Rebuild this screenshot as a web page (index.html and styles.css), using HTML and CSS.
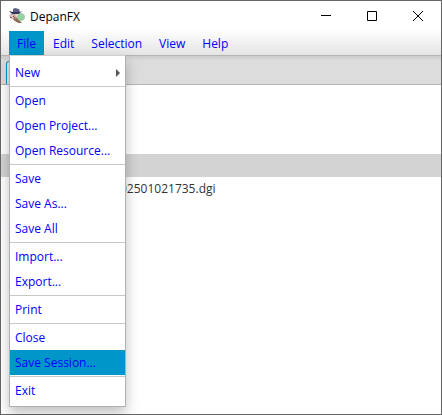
FILE: index.html
```html
<!DOCTYPE html>
<html lang="en">
<head>
    <meta charset="UTF-8">
    <meta name="viewport" content="width=device-width, initial-scale=1.0">
    <title>DepanFX</title>
    <link rel="stylesheet" href="styles.css">
</head>
<body>
    <div class="window">
        <header class="title-bar">
            <svg class="app-icon" width="16" height="16" viewBox="0 0 16 16" aria-hidden="true">
                <path d="M1 7 L4 5 L12 5 L13 10 L10 14 L5 12 L1 9 Z" fill="#c9a491"/>
                <path d="M0 7 L3 6 L5 8 L4 11 L1 10 Z" fill="#d9bfc4"/>
                <path d="M4 11 L8 10 L11 13 L13 15 L9 15 L6 13 Z" fill="#8d6a55"/>
                <path d="M6 6 L10 6 L9 8 L7 9 Z" fill="#ecdcd0"/>
                <path d="M4 1 L6 0 L10 1 L11 4 L4 4 Z" fill="#5a5f83"/>
                <path d="M0 3 L4 4 L11 4 L13 3 L10 6 L3 6 Z" fill="#34375c"/>
                <path d="M1 9 L3 10 M4 8 L6 10 M8 11 L9 12" stroke="#7a564c"/>
                <circle cx="12" cy="9" r="3.5" fill="#8fd49b" stroke="#a9cbb0"/>
            </svg>
            <h1 class="title">DepanFX</h1>
            <div class="window-buttons">
                <button class="window-button" type="button" aria-label="Minimize">
                    <svg width="10" height="10" viewBox="0 0 10 10"><path d="M0 4.5H10"/></svg>
                </button>
                <button class="window-button" type="button" aria-label="Maximize">
                    <svg width="10" height="10" viewBox="0 0 10 10"><path d="M.5 .5H9.5V9.5H.5Z"/></svg>
                </button>
                <button class="window-button" type="button" aria-label="Close">
                    <svg width="10" height="10" viewBox="0 0 10 10"><path d="M0 0L10 10M10 0L0 10"/></svg>
                </button>
            </div>
        </header>

        <nav class="menu-bar">
            <div class="menu">
                <button class="menu-button active" type="button">File</button>
                <div class="dropdown">
                    <button class="menu-item" type="button">New
                        <svg class="arrow" width="4" height="8" viewBox="0 0 4 8"><path d="M0 0L4 4L0 8Z"/></svg>
                    </button>
                    <hr>
                    <button class="menu-item" type="button">Open</button>
                    <button class="menu-item" type="button">Open Project...</button>
                    <button class="menu-item" type="button">Open Resource...</button>
                    <hr>
                    <button class="menu-item" type="button">Save</button>
                    <button class="menu-item" type="button">Save As...</button>
                    <button class="menu-item" type="button">Save All</button>
                    <hr>
                    <button class="menu-item" type="button">Import...</button>
                    <button class="menu-item" type="button">Export...</button>
                    <hr>
                    <button class="menu-item" type="button">Print</button>
                    <hr>
                    <button class="menu-item" type="button">Close</button>
                    <button class="menu-item active" type="button">Save Session...</button>
                    <hr>
                    <button class="menu-item" type="button">Exit</button>
                </div>
            </div>
            <button class="menu-button" type="button">Edit</button>
            <button class="menu-button" type="button">Selection</button>
            <button class="menu-button" type="button">View</button>
            <button class="menu-button" type="button">Help</button>
        </nav>

        <div class="tab-strip">
            <div class="tab"></div>
        </div>

        <main class="tree">
            <div class="row selected"></div>
            <div class="row">02501021735.dgi</div>
        </main>
    </div>
</body>
</html>
```
FILE: styles.css
```css
* {
    box-sizing: border-box;
}
body {
    margin: 0;
    font-family: "Open Sans", "Noto Sans", sans-serif;
    font-size: 12px;
    color: #333;
}
button {
    font: inherit;
    border: none;
    background: none;
    padding: 0;
}
.window {
    display: flex;
    flex-direction: column;
    min-height: 100vh;
    background-color: white;
    border: 1px solid #666;
}
.title-bar {
    display: flex;
    align-items: center;
    height: 30px;
    padding-left: 8px;
}
.title {
    margin: 0 0 0 5px;
    font-size: 12px;
    font-weight: normal;
    color: black;
}
.window-buttons {
    display: flex;
    margin-left: auto;
}
.window-button {
    display: flex;
    align-items: center;
    justify-content: center;
    width: 46px;
    height: 30px;
}
.window-button svg {
    fill: none;
    stroke: black;
}
.menu-bar {
    display: flex;
    gap: 1px;
    height: 25px;
    padding-left: 8px;
    background: linear-gradient(#fdfdfd, #e4e4e4);
    border-bottom: 1px solid #b5b5b5;
}
.menu {
    position: relative;
    display: flex;
}
.menu-button {
    padding: 0 8px;
    color: #0000ff;
}
.active {
    background-color: #0096c9;
}
.menu-button:hover,
.menu-item:hover {
    background-color: #0096c9;
}
.dropdown {
    position: absolute;
    top: 100%;
    left: 0;
    z-index: 1;
    width: 117px;
    padding: 4px 0 3px;
    background-color: white;
    border: 1px solid #b0b0b0;
    border-top-color: #d0d0d0;
    box-shadow: 0 6px 12px rgba(0, 0, 0, 0.25);
}
.dropdown hr {
    height: 1px;
    margin: 1px 0;
    border: none;
    background-color: #c8c8c8;
}
.menu-item {
    display: flex;
    align-items: center;
    justify-content: space-between;
    width: 100%;
    height: 25px;
    padding: 0 5px;
    color: #0000ff;
    white-space: nowrap;
}
.arrow {
    fill: #555;
}
.tab-strip {
    display: flex;
    align-items: flex-end;
    height: 29px;
    padding-left: 5px;
    background: linear-gradient(#cccccc, #dcdcdc 5px);
    border-bottom: 1px solid #b5b5b5;
}
.tab {
    width: 90px;
    height: 23px;
    background-color: #e8e8e8;
    border: 1px solid #0096c9;
    border-bottom: none;
    border-radius: 3px 3px 0 0;
}
.tree {
    flex: 1;
    padding-top: 69px;
}
.row {
    height: 23px;
    padding-left: 119px;
    line-height: 23px;
}
.row.selected {
    background-color: #d3d3d3;
}
```
